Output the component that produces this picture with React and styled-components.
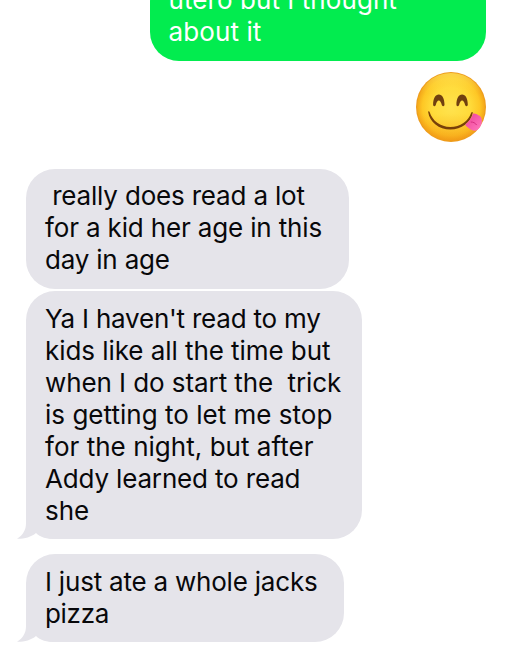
import React from "react";
import styled, { createGlobalStyle, css } from "styled-components";

const GlobalStyle = createGlobalStyle`
  body {
    margin: 0;
    background: #fff;
  }
`;

const Thread = styled.main`
  box-sizing: border-box;
  display: flex;
  flex-direction: column;
  justify-content: flex-end;
  height: 653px;
  padding: 0 20px 11px 26px;
  overflow: hidden;
  font-family: Inter, "Liberation Sans", sans-serif;
  font-size: 26px;
  line-height: 32px;
`;

const sent = css`
  align-self: flex-end;
  background: #02ec4f;
  color: #fff;
`;

const received = css`
  align-self: flex-start;
  background: #e5e4ea;
  color: #08080a;
`;

const Bubble = styled.div`
  position: relative;
  flex: none;
  box-sizing: border-box;
  width: ${props => props.$width}px;
  margin-top: ${props => props.$gap || 0}px;
  padding: ${props => (props.$raised ? "11px 0 13px 19px" : "12px 0 12px 19px")};
  border-radius: 29px;
  isolation: isolate;
  ${props => (props.$sent ? sent : received)}
`;

const Line = styled.div`
  height: 32px;
  white-space: pre;
  letter-spacing: ${props => props.$tracking || 0}px;
`;

const TailShape = styled.svg`
  position: absolute;
  z-index: -1;
  left: -9px;
  bottom: 0;
  width: 40px;
  height: 30px;
  fill: #e5e4ea;
`;

const EmojiRow = styled.div`
  display: flex;
  flex: none;
  justify-content: flex-end;
  margin-top: 11px;
`;

const Emoji = styled.svg`
  width: 70px;
  height: 70px;
  margin-bottom: 1px;
`;

const Tail = () => (
  <TailShape viewBox="0 0 40 30">
    <path d="M9 0V14C9 21 6 26 0 29.8C7 30 14 28.2 19 24C23 28.4 30 30 38 30H40V0Z" />
  </TailShape>
);

const YumFace = () => (
  <Emoji viewBox="0 0 70 70" role="img" aria-label="Face savoring food">
    <defs>
      <radialGradient id="skin" cx="50%" cy="50%" r="50%">
        <stop offset="0" stopColor="#ffe34f" />
        <stop offset="0.55" stopColor="#ffdb3a" />
        <stop offset="0.82" stopColor="#fec725" />
        <stop offset="0.95" stopColor="#f5ab1b" />
        <stop offset="1" stopColor="#e9951a" />
      </radialGradient>
      <linearGradient id="shine" x1="0" y1="0" x2="0" y2="1">
        <stop offset="0" stopColor="#fff06a" stopOpacity="0.6" />
        <stop offset="0.3" stopColor="#ffe047" stopOpacity="0" />
        <stop offset="0.6" stopColor="#f59a17" stopOpacity="0" />
        <stop offset="1" stopColor="#ef8d13" stopOpacity="0.5" />
      </linearGradient>
      <linearGradient id="tongue" x1="0" y1="0" x2="1" y2="1">
        <stop offset="0" stopColor="#ee4095" />
        <stop offset="1" stopColor="#ff7abf" />
      </linearGradient>
    </defs>
    <circle cx="35" cy="35" r="35" fill="url(#skin)" />
    <circle cx="35" cy="35" r="34" fill="url(#shine)" />
    <path
      d="M17.1 32.6C17.1 26.5 19.4 22.5 22.8 22.5S28.5 26.5 28.5 32.6C28.5 34.6 26.6 34.7 25.8 33C25 30 24.1 28.4 22.8 28.4S20.5 30 19.8 33C19 34.7 17.1 34.6 17.1 32.6Z"
      fill="#704010"
    />
    <path
      d="M40.4 32.6C40.4 26.5 42.7 22.5 46.1 22.5S51.8 26.5 51.8 32.6C51.8 34.6 49.9 34.7 49.1 33C48.4 30 47.4 28.4 46.1 28.4S43.8 30 43.1 33C42.3 34.7 40.4 34.6 40.4 32.6Z"
      fill="#704010"
    />
    <path
      d="M12.2 40.3C13.5 50 23 57.6 34.3 57.6C45.5 57.6 55 50.5 56.8 40.8C56.9 39.7 55.7 39.6 55.2 40.7C52.4 49.3 44.3 54.9 34.3 54.9C24.3 54.9 16.5 49 13.6 40C13.2 38.8 12 39.1 12.2 40.3Z"
      fill="#784009"
    />
    <path
      d="M49.5 52.3C53.1 49.5 55.5 46.2 57 41.5C59 40.9 61.8 42.6 64 44C66.4 46 66.4 51 64.6 54C62.5 58 59.5 59.6 56.1 58.2C53.3 57.1 51.4 55 49.5 53.4Z"
      fill="url(#tongue)"
    />
    <path d="M55.2 50C57.5 50 59.2 51 60.5 52.8" fill="none" stroke="#d62f80" strokeWidth="1" strokeLinecap="round" />
  </Emoji>
);

export default function App() {
  return (
    <>
      <GlobalStyle />
      <Thread>
        <Bubble $sent $raised $width={336.5}>
          <Line $tracking={0.07}>utero but I thought</Line>
          <Line $tracking={0.1}>about it</Line>
        </Bubble>
        <EmojiRow>
          <YumFace />
        </EmojiRow>
        <Bubble $raised $width={323} $gap={26}>
          <Line $tracking={-0.18}> really does read a lot</Line>
          <Line $tracking={-0.15}>for a kid her age in this</Line>
          <Line $tracking={-0.2}>day in age</Line>
        </Bubble>
        <Bubble $width={336} $gap={2}>
          <Tail />
          <Line $tracking={-0.22}>Ya I haven't read to my</Line>
          <Line $tracking={-0.06}>kids like all the time but</Line>
          <Line $tracking={-0.08}>when I do start the  trick</Line>
          <Line $tracking={0.02}>is getting to let me stop</Line>
          <Line $tracking={0.03}>for the night, but after</Line>
          <Line $tracking={-0.16}>Addy learned to read</Line>
          <Line>she</Line>
        </Bubble>
        <Bubble $width={318} $gap={15}>
          <Tail />
          <Line $tracking={-0.21}>I just ate a whole jacks</Line>
          <Line $tracking={-0.3}>pizza</Line>
        </Bubble>
      </Thread>
    </>
  );
}
